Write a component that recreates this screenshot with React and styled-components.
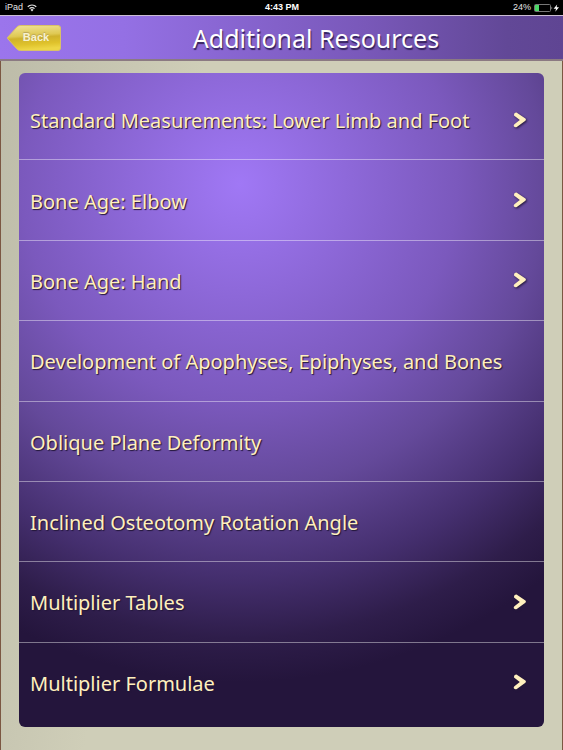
import styled, { createGlobalStyle } from 'styled-components'

const resources = [
  { title: 'Standard Measurements: Lower Limb and Foot', hasMore: true },
  { title: 'Bone Age: Elbow', hasMore: true },
  { title: 'Bone Age: Hand', hasMore: true },
  { title: 'Development of Apophyses, Epiphyses, and Bones' },
  { title: 'Oblique Plane Deformity' },
  { title: 'Inclined Osteotomy Rotation Angle' },
  { title: 'Multiplier Tables', hasMore: true },
  { title: 'Multiplier Formulae', hasMore: true },
]

const GlobalStyle = createGlobalStyle`
  * {
    box-sizing: border-box;
  }

  body {
    margin: 0;
    background: #cfceb8;
  }
`

const Page = styled.div`
  --hand: 'Comic Sans MS', 'Noto Sans', sans-serif;
  --system: 'Liberation Sans', Arial, sans-serif;
  display: flex;
  flex-direction: column;
  min-height: 100vh;
`

const StatusBar = styled.div`
  display: grid;
  grid-template-columns: 1fr auto 1fr;
  align-items: center;
  height: 15px;
  padding: 0 4px 0 5px;
  background: #000;
  color: #e4e4e4;
  font: 9px/15px var(--system);
`

const Carrier = styled.div`
  display: flex;
  align-items: center;
  gap: 4px;
`

const Clock = styled.time`
  color: #fff;
  font-weight: bold;
`

const Power = styled(Carrier)`
  justify-content: flex-end;
  gap: 3px;
`

const Header = styled.header`
  display: flex;
  align-items: center;
  height: 46px;
  padding-left: 7px;
  border-top: 1px solid #cbbdd3;
  border-bottom: 2px solid #8b7a82;
  background: linear-gradient(90deg, #9b75ec, #9470e4 22%, #7958b9 65%, #624897 90%, #5f4593);
`

const BackButton = styled.button`
  display: grid;
  width: 54px;
  height: 26px;
  padding: 0;
  border: 0;
  background: none;
  color: #f8f2d0;
  font: bold 11px/24px var(--system);
  text-shadow: 0 -1px 1px #b8a35a;
  cursor: pointer;

  > * {
    grid-area: 1 / 1;
  }

  span {
    padding-left: 4px;
  }
`

const Title = styled.h1`
  flex: 1;
  margin: 0;
  padding-left: 8px;
  color: #fff;
  font: 25px/40px var(--hand);
  text-align: center;
  text-shadow: 1px 2px 1px #35235c;
`

const Main = styled.main`
  flex: 1;
  display: flex;
  padding: 12px 18px 23px;
  border: solid #7b5742;
  border-width: 0 1px;
  background: linear-gradient(100deg, #bdbca9, #cfceb8 30%);
`

const ResourceList = styled.ul`
  flex: 1;
  display: flex;
  flex-direction: column;
  margin: 0;
  padding: 7px 0 5px;
  border-radius: 6px;
  list-style: none;
  background: radial-gradient(
    circle farthest-corner at 42% 17%,
    #a078f5,
    #7b59bd 35%,
    #64499a 49%,
    #452f6f 63%,
    #2e1d4a 73%,
    #24153c 80%
  );
`

const ResourceItem = styled.li`
  flex: 1;
  display: flex;

  & + & {
    border-top: 1px solid rgba(255, 255, 255, 0.42);
  }
`

const ResourceLink = styled.a`
  flex: 1;
  display: flex;
  align-items: center;
  justify-content: space-between;
  min-height: 64px;
  padding: 0 18px 0 11px;
  color: #fff0be;
  font: 20px/28px var(--hand);
  text-decoration: none;
  text-shadow: 1px 1px 1px #221638;

  span {
    padding-top: 3px;
  }

  svg {
    flex: none;
    filter: drop-shadow(1px 1px 1px #221638);
  }
`

function WifiIcon() {
  return (
    <svg width="10" height="8" viewBox="0 0 20 16" fill="none" stroke="#e4e4e4" strokeWidth="2.4" aria-hidden="true">
      <path d="M1.5 5.5a12 12 0 0 1 17 0M5 9.2a7 7 0 0 1 10 0" />
      <path d="M7 11.6a4.2 4.2 0 0 1 6 0L10 15z" fill="#e4e4e4" stroke="none" />
    </svg>
  )
}

function BatteryIcon() {
  return (
    <svg width="25" height="8" viewBox="0 0 25 8" aria-hidden="true">
      <rect x=".5" y=".5" width="16" height="7" rx="1" fill="none" stroke="#777" />
      <rect x="1" y="1" width="4" height="6" fill="#4bd765" />
      <path d="M17.5 2.4q1.6 1.6 0 3.2z" fill="#bbb" />
      <path d="M23.2.4 19.6 4.7H22l-.7 3L25 3.2h-2.400z" fill="#fff" />
    </svg>
  )
}

function BackShape() {
  return (
    <svg width="54" height="26" viewBox="0 0 54 26" aria-hidden="true">
      <defs>
        <linearGradient id="gold" x1="0" y1="0" x2=".15" y2="1">
          <stop offset="0" stopColor="#f1e49c" />
          <stop offset=".45" stopColor="#dfc953" />
          <stop offset=".55" stopColor="#cfb22c" />
          <stop offset=".8" stopColor="#dfc22b" />
          <stop offset="1" stopColor="#edd645" />
        </linearGradient>
      </defs>
      <path
        d="M.8 13.8Q0 13 .8 12.2L10 2Q11.4.5 13.5.5H51Q53.5.5 53.5 3V23Q53.5 25.5 51 25.5H13.5Q11.4 25.5 10 24z"
        fill="url(#gold)"
        stroke="#d9c168"
      />
    </svg>
  )
}

function Chevron() {
  return (
    <svg width="13" height="16" viewBox="0 0 13 16" fill="#fff0be" aria-hidden="true">
      <path d="M1 3.6Q.6 1 3 .6 4 .5 4.600 1.200L12.400 6.400Q13.400 7.600 12.400 8.700L3.800 15Q2.200 15.900 1 14.600.300 13.200 1.400 12.200L6.800 8.100z" />
    </svg>
  )
}

export default function App() {
  return (
    <Page>
      <GlobalStyle />
      <StatusBar>
        <Carrier>
          iPad <WifiIcon />
        </Carrier>
        <Clock>4:43 PM</Clock>
        <Power>
          24% <BatteryIcon />
        </Power>
      </StatusBar>
      <Header>
        <BackButton type="button">
          <BackShape />
          <span>Back</span>
        </BackButton>
        <Title>Additional Resources</Title>
      </Header>
      <Main>
        <ResourceList>
          {resources.map(({ title, hasMore }) => (
            <ResourceItem key={title}>
              <ResourceLink href="#">
                <span>{title}</span>
                {hasMore && <Chevron />}
              </ResourceLink>
            </ResourceItem>
          ))}
        </ResourceList>
      </Main>
    </Page>
  )
}
